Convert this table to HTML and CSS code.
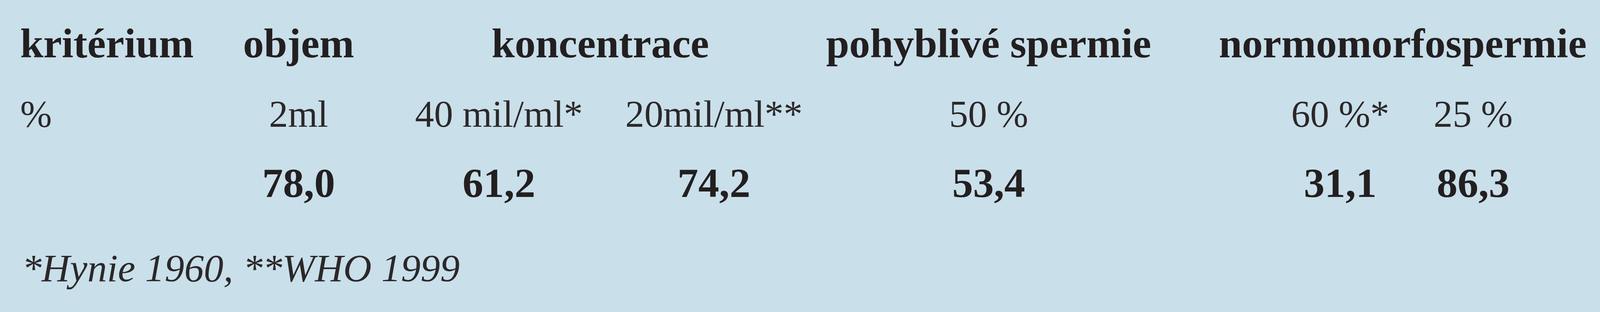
FILE: index.html
```html
<!DOCTYPE html>
<html lang="cs">
<head>
<meta charset="utf-8">
<title>Tabulka</title>
<link rel="stylesheet" href="styles.css">
</head>
<body>
<div class="panel">
  <div class="grid">
    <div class="cell head label">kritérium</div>
    <div class="cell head c1">objem</div>
    <div class="cell head c2s">koncentrace</div>
    <div class="cell head c4">pohyblivé spermie</div>
    <div class="cell head c6s">normomorfospermie</div>

    <div class="cell norm label">%</div>
    <div class="cell norm c1">2ml</div>
    <div class="cell norm c2">40 mil/ml*</div>
    <div class="cell norm c3">20mil/ml**</div>
    <div class="cell norm c4">50 %</div>
    <div class="cell norm c6">60 %*</div>
    <div class="cell norm c7">25 %</div>

    <div class="cell val c1">78,0</div>
    <div class="cell val c2">61,2</div>
    <div class="cell val c3">74,2</div>
    <div class="cell val c4">53,4</div>
    <div class="cell val c6">31,1</div>
    <div class="cell val c7">86,3</div>
  </div>
  <p class="note">*Hynie 1960, **WHO 1999</p>
</div>
</body>
</html>
```
FILE: styles.css
```css
:root {
  --u: calc(100vw / 5224);
}
html, body {
  margin: 0;
  padding: 0;
  background: #c9dfea;
}
body {
  min-height: 800px;
  overflow: hidden;
  font-family: "Liberation Serif", "Times New Roman", serif;
  color: #231f20;
}
.panel {
  padding-top: 12px;
  padding-left: calc(66 * var(--u));
}
.grid {
  display: grid;
  grid-template-columns:
    calc(626 * var(--u)) calc(566 * var(--u)) calc(742 * var(--u))
    calc(662 * var(--u)) calc(1132 * var(--u)) calc(352 * var(--u))
    calc(460 * var(--u)) calc(408 * var(--u));
  grid-auto-rows: 179px;
}
.cell {
  display: flex;
  justify-content: center;
  align-items: flex-start;
  white-space: nowrap;
  line-height: 1.107;
  box-sizing: border-box;
}
.label {
  grid-column: 1;
  justify-content: flex-start;
}
.c1 { grid-column: 2; }
.c2 { grid-column: 3; }
.c3 { grid-column: 4; }
.c2s { grid-column: 3 / span 2; }
.c4 { grid-column: 5; }
.c6 { grid-column: 7; }
.c7 { grid-column: 8; }
.c6s { grid-column: 7 / span 2; }

.head {
  grid-row: 1;
  font-weight: bold;
  font-size: calc(136 * var(--u));
  padding-top: calc(135px - 121.2 * var(--u));
}
.norm {
  grid-row: 2;
  font-weight: normal;
  font-size: calc(124 * var(--u));
  padding-top: calc(135px - 110.5 * var(--u));
  color: #2b2829;
}
.val {
  grid-row: 3;
  font-weight: bold;
  font-size: calc(136 * var(--u));
  padding-top: calc(135px - 121.2 * var(--u));
}
.note {
  margin: 0;
  padding-top: calc(172px - 114 * var(--u));
  padding-left: calc(6 * var(--u));
  font-style: italic;
  font-size: calc(128 * var(--u));
  line-height: 1.107;
  color: #2b2829;
  white-space: nowrap;
}
```
